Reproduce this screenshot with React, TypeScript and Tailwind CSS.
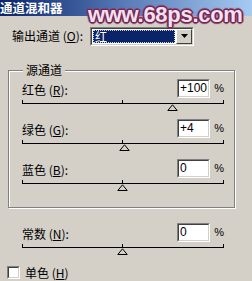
import React from 'react';

const font = { fontFamily: '"Noto Sans CJK SC", "Liberation Sans", sans-serif' };

const Sunken: React.FC<{ className?: string; children?: React.ReactNode }> = ({ className, children }) => (
  <div className={`border border-t-[#808080] border-l-[#808080] border-b-white border-r-white ${className ?? ''}`}>
    <div className="h-full w-full border border-t-[#404040] border-l-[#404040] border-b-[#d4d0c8] border-r-[#d4d0c8]">
      {children}
    </div>
  </div>
);

const Label: React.FC<{ text: string; hot: string }> = ({ text, hot }) => (
  <span className="text-[12px] leading-none text-black">
    {text} (<span className="underline underline-offset-1">{hot}</span>):
  </span>
);

interface SliderRowProps {
  text: string;
  hot: string;
  value: number;
}

const SliderRow: React.FC<SliderRowProps> = ({ text, hot, value }) => {
  // -200..200 mapped onto the 201px track
  const pos = Math.round(((value + 200) / 400) * 200);
  const shown = value > 0 ? `+${value}` : `${value}`;
  return (
    <div className="w-[202px] h-[40px] flex flex-col">
      <div className="flex items-center h-[18px]">
        <div className="flex-1">
          <Label text={text} hot={hot} />
        </div>
        <Sunken className="w-[33px] h-[19px] bg-white">
          <div className="bg-white h-full pl-[1px] text-[12px] leading-[15px] text-black" style={{ fontFamily: '"Liberation Sans", sans-serif' }}>
            {shown}
          </div>
        </Sunken>
        <span className="w-[14px] text-right text-[11px] text-black" style={{ fontFamily: '"Liberation Sans", sans-serif' }}>%</span>
      </div>
      <div className="relative h-[22px]">
        <div className="absolute left-0 top-[3px] w-[1px] h-[4px] bg-black" />
        <div className="absolute left-[100px] top-[3px] w-[1px] h-[4px] bg-black" />
        <div className="absolute left-[201px] top-[3px] w-[1px] h-[4px] bg-black" />
        <div className="absolute left-0 top-[6px] w-[202px] h-[1px] bg-black" />
        <svg className="absolute top-[7px]" style={{ left: pos - 5 }} width="11" height="7" viewBox="0 0 11 7">
          <path d="M5.5 0.8 L10.2 6.5 L0.8 6.5 Z" fill="#d4d0c8" stroke="#000" strokeWidth="1" />
        </svg>
      </div>
    </div>
  );
};

export default function App() {
  return (
    <div className="relative w-[252px] h-[281px] overflow-hidden bg-[#d4d0c8]" style={font}>
      <div className="h-[16px] flex items-center bg-gradient-to-r from-[#0a246a] via-[#5a7cb8] to-[#a6caf0]">
        <span className="text-white font-bold text-[12.5px] leading-none">通道混和器</span>
      </div>

      <div
        className="absolute left-[88px] top-[2px] text-[22px] leading-[26px] font-bold tracking-[-0.3px] text-[#f3e1f1]"
        style={{
          fontFamily: '"Liberation Sans", sans-serif',
          textShadow:
            '1px 0 0 #74264f, -1px 0 0 #74264f, 0 1px 0 #74264f, 0 -1px 0 #74264f, 1px 1px 0 #74264f, -1px -1px 0 #74264f, 1px -1px 0 #74264f, -1px 1px 0 #74264f, 2px 0 1px #8a3a66, -2px 0 1px #8a3a66, 0 2px 1px #8a3a66, 0 -2px 1px #8a3a66',
        }}
      >
        www.68ps.com
      </div>

      <div className="mt-[11px] flex items-center h-[18px] pl-[12px]">
        <span className="w-[78px] text-[12px] leading-none">
          输出通道 (<span className="underline underline-offset-1">O</span>):
        </span>
        <Sunken className="w-[104px] h-[19px] bg-white">
          <div className="flex h-full bg-white">
            <div className="flex-1 p-[1px]">
              <div className="h-full bg-[#0a246a] border border-dotted border-[#d4d0c8] text-white text-[12px] leading-[11px] pl-[1px] overflow-visible">红</div>
            </div>
            <div className="w-[16px] h-full flex items-center justify-center bg-[#d4d0c8] border border-t-white border-l-white border-b-[#404040] border-r-[#404040]">
              <svg width="7" height="4" viewBox="0 0 7 4">
                <path d="M0 0 H7 L3.5 4 Z" fill="#000" />
              </svg>
            </div>
          </div>
        </Sunken>
      </div>

      <div className="relative mt-[25px] ml-[8px] w-[227px] h-[138px] border border-[#808080] shadow-[inset_1px_1px_0_#ffffff,1px_1px_0_#ffffff] pt-[8px] pl-[13px]">
        <span className="absolute left-[14px] top-[-8px] px-[3px] bg-[#d4d0c8] text-[12px] leading-[14px]">源通道</span>
        <SliderRow text="红色" hot="R" value={100} />
        <SliderRow text="绿色" hot="G" value={4} />
        <SliderRow text="蓝色" hot="B" value={0} />
      </div>

      <div className="mt-[15px] pl-[22px]">
        <SliderRow text="常数" hot="N" value={0} />
      </div>

      <div className="mt-[3px] pl-[7px] flex items-center gap-[5px]">
        <Sunken className="w-[13px] h-[13px] bg-white">
          <div className="h-full w-full bg-white" />
        </Sunken>
        <span className="text-[12px] leading-none">
          单色 (<span className="underline underline-offset-1">H</span>)
        </span>
      </div>
    </div>
  );
}
